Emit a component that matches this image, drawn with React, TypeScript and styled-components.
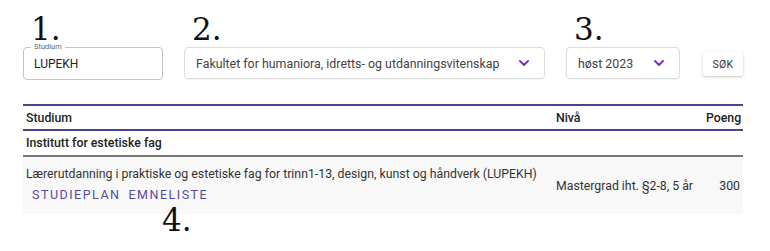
import React from 'react'
import styled, {createGlobalStyle} from 'styled-components'

const GlobalStyle = createGlobalStyle`
	html, body {
		margin: 0;
		padding: 0;
		background: #fff;
	}
	body {
		font-family: Roboto, "Noto Sans", sans-serif;
		color: #222;
	}
`

const purple = '#4a4392'

const Page = styled.div`
	width: 743px;
	min-height: 251px;
	box-sizing: border-box;
	padding: 11px 0 0 23px;
`

const SearchBar = styled.div`
	display: flex;
	align-items: flex-start;
	gap: 21px;
`

const FieldGroup = styled.div`
	display: flex;
	flex-direction: column;
`

const StepNumber = styled.span`
	font-family: "DejaVu Serif", "Liberation Serif", serif;
	font-size: 31px;
	line-height: 36px;
	height: 36px;
	color: #111;
	padding-left: 8px;
`

const TextField = styled.div`
	position: relative;
	width: 140px;
	height: 33px;
	box-sizing: border-box;
	border: 1px solid #c4c4c4;
	border-radius: 4px;
	display: flex;
	align-items: center;
	padding: 0 10px;
	font-size: 12px;
	color: #222;
`

const FieldLabel = styled.span`
	position: absolute;
	top: -6px;
	left: 7px;
	padding: 0 3px;
	background: #fff;
	font-size: 7.5px;
	line-height: 10px;
	color: #666;
`

type SelectProps = {
	width: number
}

const SelectBox = styled.div<SelectProps>`
	width: ${props => props.width}px;
	height: 32px;
	box-sizing: border-box;
	border: 1px solid #dcdcdc;
	border-radius: 4px;
	display: flex;
	align-items: center;
	justify-content: space-between;
	padding: 0 14px 0 11px;
	font-size: 12.4px;
	color: #444;
	box-shadow: 0 1px 1px rgba(0, 0, 0, 0.04);
`

const Button = styled.button`
	margin: 41px 0 0 2px;
	width: 40px;
	height: 24px;
	border: none;
	border-radius: 3px;
	background: #fff;
	font-family: Roboto, "Noto Sans", sans-serif;
	font-size: 10.5px;
	color: #333;
	letter-spacing: 0.3px;
	box-shadow: 0 1px 3px rgba(0, 0, 0, 0.22);
	padding: 0;
`

const TableWrap = styled.div`
	position: relative;
	margin-top: 24px;
`

const Table = styled.div`
	border-top: 2px solid ${purple};
	font-size: 12.3px;
`

const columns = '1fr 150px 37px'

const HeaderRow = styled.div`
	display: grid;
	grid-template-columns: ${columns};
	align-items: center;
	height: 23px;
	border-bottom: 2px solid ${purple};
	font-weight: 500;
	color: #222;
	padding-left: 3px;
`

const RightCell = styled.span`
	text-align: right;
	padding-right: 3px;
`

const GroupRow = styled.div`
	height: 24px;
	display: flex;
	align-items: center;
	font-weight: 500;
	border-bottom: 2px solid #767676;
	padding-left: 3px;
	color: #222;
`

const DataRow = styled.div`
	display: grid;
	grid-template-columns: ${columns};
	align-items: center;
	height: 57px;
	background: #f8f8f8;
	padding-left: 3px;
	color: #333;
`

const StudyCell = styled.div`
	display: flex;
	flex-direction: column;
	gap: 6px;
	margin-top: -3px;
`

const Links = styled.div`
	display: flex;
	gap: 8px;
	padding-left: 6px;
`

const Link = styled.a`
	color: #564c9f;
	text-transform: uppercase;
	letter-spacing: 1.5px;
	font-size: 12.5px;
	text-decoration: none;
`

const Annotation = styled.span`
	position: absolute;
	z-index: 2;
	left: 139px;
	top: 98px;
	font-family: "DejaVu Serif", "Liberation Serif", serif;
	font-size: 31px;
	line-height: 36px;
	color: #111;
`

const Chevron = () => (
	<svg width="12" height="8" viewBox="0 0 12 8" fill="none">
		<path d="M2 2 L6 6 L10 2" stroke="#7b2fd0" strokeWidth="2" strokeLinecap="round" strokeLinejoin="round"/>
	</svg>
)

const App = () => {
	return (
		<>
			<GlobalStyle/>
			<Page>
				<SearchBar>
					<FieldGroup>
						<StepNumber>1.</StepNumber>
						<TextField>
							<FieldLabel>Studium</FieldLabel>
							LUPEKH
						</TextField>
					</FieldGroup>
					<FieldGroup>
						<StepNumber>2.</StepNumber>
						<SelectBox width={361}>
							Fakultet for humaniora, idretts- og utdanningsvitenskap
							<Chevron/>
						</SelectBox>
					</FieldGroup>
					<FieldGroup>
						<StepNumber>3.</StepNumber>
						<SelectBox width={114}>
							høst 2023
							<Chevron/>
						</SelectBox>
					</FieldGroup>
					<Button>SØK</Button>
				</SearchBar>
				<TableWrap>
					<Table>
						<HeaderRow>
							<span>Studium</span>
							<span>Nivå</span>
							<RightCell>Poeng</RightCell>
						</HeaderRow>
						<GroupRow>Institutt for estetiske fag</GroupRow>
						<DataRow>
							<StudyCell>
								<span>Lærerutdanning i praktiske og estetiske fag for trinn1-13, design, kunst og håndverk (LUPEKH)</span>
								<Links>
									<Link href="#">Studieplan</Link>
									<Link href="#">Emneliste</Link>
								</Links>
							</StudyCell>
							<span>Mastergrad iht. §2-8, 5 år</span>
							<RightCell>300</RightCell>
						</DataRow>
					</Table>
					<Annotation>4.</Annotation>
				</TableWrap>
			</Page>
		</>
	)
}

export default App
